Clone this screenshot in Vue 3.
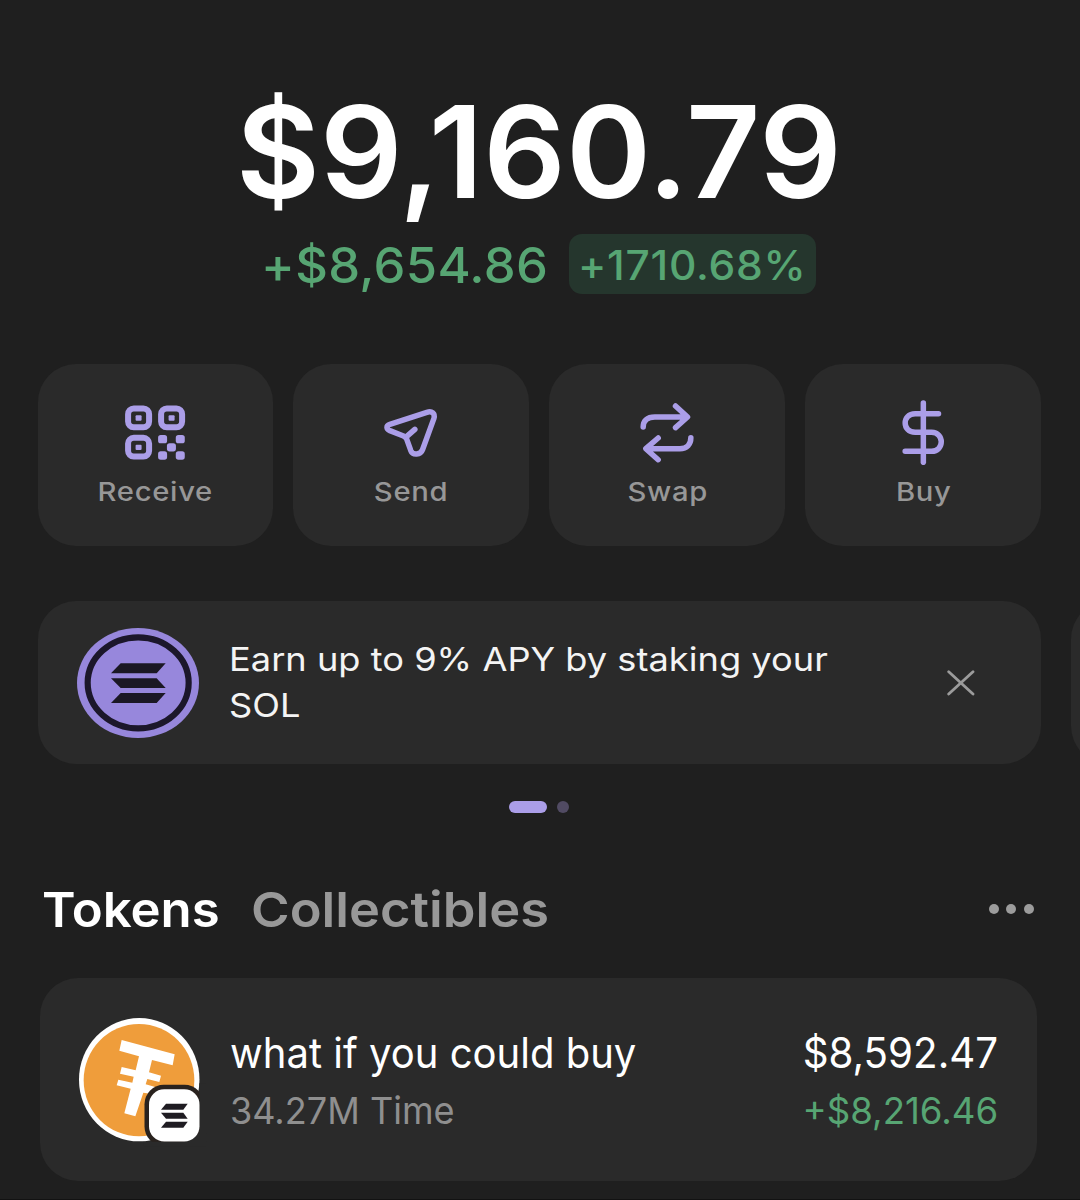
<script setup>
const actions = [
  { label: 'Receive', icon: 'receive', box: '275.75 130 200 200' },
  { label: 'Send', icon: 'send', box: '264.5 130 200 200' },
  { label: 'Swap', icon: 'swap', box: '267.5 130 200 200' },
  { label: 'Buy', icon: 'buy', box: '270.5 130 200 200' }
]
const finders = [[285, 150], [384, 150], [285, 238]]
const modules = [[384, 238], [437, 238], [410.5, 262.5], [384, 287], [437, 287]]
</script>

<template>
  <main class="wallet">
    <h1 class="balance"><span>$9,160.79</span></h1>
    <div class="change">
      <span class="amount">+$8,654.86</span>
      <span class="percent"><span>+1710.68%</span></span>
    </div>

    <nav class="actions">
      <button v-for="a in actions" :key="a.label" class="action" type="button">
        <svg :viewBox="a.box" class="icon">
          <g v-if="a.icon === 'receive'" fill="#ab9ee8">
            <template v-for="(f, i) in finders" :key="'f' + i">
              <rect :x="f[0] + 9" :y="f[1] + 8.5" width="63" height="56" rx="17" fill="none" stroke="#ab9ee8" stroke-width="18" />
              <rect :x="f[0] + 31.5" :y="f[1] + 29" width="18" height="16" rx="3" />
            </template>
            <rect v-for="(m, i) in modules" :key="'m' + i" :x="m[0]" :y="m[1]" width="27" height="25" rx="8" />
          </g>
          <g v-else-if="a.icon === 'send'" class="stroke">
            <path d="M300 206 L411 170 C426 165 437 173 432 189 L398 282 C392 298 369 300 363 285 L350 249 Q347 244 341 241 L300 225 C289 220 288 210 300 206 Z" />
            <path d="M350 243 L375 221" />
          </g>
          <g v-else-if="a.icon === 'swap'" class="stroke">
            <path d="M295 214 C295 196 306 184 330 184 H427 M392 151 L428 184 L392 216" />
            <path d="M438 246 C438 265 427 279 405 279 H304 M340 247 L303 279 L340 312" />
          </g>
          <g v-else class="stroke">
            <path d="M370.5 142 V320" />
            <path d="M416 174 H346 C306 174 306 230 346 230 H395 C434 230 434 287 395 287 H316" />
          </g>
        </svg>
        <span class="label">{{ a.label }}</span>
      </button>
    </nav>

    <section class="promos">
      <article class="promo">
        <svg class="sol" viewBox="141 113 366 330">
          <ellipse cx="324" cy="278" rx="183" ry="165" fill="#9787dc" />
          <ellipse cx="324.5" cy="277.5" rx="151.5" ry="136.5" fill="none" stroke="#1c172b" stroke-width="18.5" />
          <g fill="#1b1824">
            <path d="M272 219 H407 L380 249 H243 Z" />
            <path d="M243 264 H380 L407 293 H272 Z" />
            <path d="M272 308 H407 L380 338 H243 Z" />
          </g>
        </svg>
        <p class="pitch">Earn up to 9% APY by staking your<br />SOL</p>
        <svg class="close" viewBox="0 0 28 26">
          <path d="M1.7 1.7 L26 24 M26 1.7 L1.7 24" />
        </svg>
      </article>
      <article class="promo"></article>
    </section>
    <div class="pager"><i class="on"></i><i></i></div>

    <div class="tabs">
      <span class="tab active">Tokens</span>
      <span class="tab">Collectibles</span>
      <span class="more"><i></i><i></i><i></i></span>
    </div>

    <section class="token">
      <svg class="coin" viewBox="147 144 363 372">
        <ellipse cx="327.7" cy="329" rx="180.7" ry="185" fill="#fff" />
        <ellipse cx="327" cy="330.5" rx="166" ry="168.5" fill="#ef9d3b" />
        <path fill="#fff" d="M275 210 L434 253 L428 286 L366 270 L357 307 L393 317 L388 336 L352 327 L347 343 L386 354 L381 374 L340 368 L316 439 L283 430 L302 356 L260 346 L265 329 L307 338 L311 320 L270 311 L275 291 L317 301 L327 259 L268 242 Z" />
        <rect x="343.5" y="344.5" width="178" height="183" rx="58" fill="#29221e" />
        <path d="M508 340 H530 V530 H340 V515 H460 L508 490 Z" fill="#2a2a2a" />
        <rect x="357" y="358" width="151.5" height="156.5" rx="46" fill="#fff" />
        <g fill="#1f1c22">
          <path d="M408 401 H473 L460 419 H393 Z" />
          <path d="M393 428 H460 L473 446 H408 Z" />
          <path d="M408 455 H473 L460 473 H393 Z" />
        </g>
      </svg>
      <div class="info">
        <div class="name">what if you could buy</div>
        <div class="qty">34.27M Time</div>
      </div>
      <div class="value">
        <div class="usd">$8,592.47</div>
        <div class="gain">+$8,216.46</div>
      </div>
    </section>
  </main>
</template>

<style>
body { background: #1f1f1f; }
</style>

<style scoped>
.wallet {
  box-sizing: border-box;
  width: 1080px;
  height: 1200px;
  padding: 76.5px 0 0 37.5px;
  overflow: hidden;
  background: #1f1f1f;
  border-bottom: 1px solid #121212;
  color: #fff;
  font-family: Inter, "Liberation Sans", sans-serif;
  white-space: nowrap;
}
.balance {
  margin: 0 0 0 198.5px;
  height: 150px;
  font-size: 127.5px;
  line-height: 150px;
  font-weight: 560;
}
.balance span {
  display: inline-block;
  transform: scaleX(1.013);
  transform-origin: left;
}
.change {
  display: flex;
  justify-content: space-between;
  width: 554.5px;
  height: 60px;
  margin: 7px 0 0 223.5px;
  color: #57a573;
  font-weight: 550;
}
.amount {
  font-size: 49px;
  line-height: 64px;
  letter-spacing: 0.3px;
  transform: scaleX(1.034);
  transform-origin: left;
}
.percent {
  box-sizing: border-box;
  width: 246.5px;
  height: 60px;
  padding-left: 9px;
  border-radius: 13px;
  background: #25362d;
  font-size: 40.5px;
  line-height: 63px;
}
.percent span {
  display: inline-block;
  letter-spacing: 0.7px;
  transform: scaleX(1.05);
  transform-origin: left;
}
.actions {
  display: flex;
  gap: 20.6px;
  margin-top: 70px;
}
.action {
  display: flex;
  flex-direction: column;
  align-items: center;
  width: 235.4px;
  height: 182.3px;
  padding: 35px 0 0;
  border: 0;
  border-radius: 38px;
  background: #2a2a2a;
  color: #979797;
  font: 540 26px/40px Inter, "Liberation Sans", sans-serif;
}
.icon {
  flex: none;
  width: 66.7px;
  height: 66.7px;
  margin-bottom: 7px;
}
.stroke {
  fill: none;
  stroke: #ab9ee8;
  stroke-width: 16.5;
  stroke-linecap: round;
  stroke-linejoin: round;
}
.label {
  letter-spacing: 0.6px;
  margin-right: -0.6px;
  transform: scaleX(1.125);
}
.promos {
  display: flex;
  gap: 30.5px;
  margin-top: 55.2px;
}
.promo {
  box-sizing: border-box;
  flex: none;
  display: flex;
  align-items: center;
  width: 1003px;
  height: 163.5px;
  padding: 0 66px 0 39.5px;
  border-radius: 38px;
  background: #2a2a2a;
}
.sol {
  width: 122px;
  height: 110px;
}
.pitch {
  margin: 0.5px 0 0 30px;
  color: #f4f4f4;
  font-size: 33px;
  line-height: 45.5px;
  transform: scaleX(1.098);
  transform-origin: left;
}
.close {
  width: 28px;
  height: 26px;
  margin-left: auto;
  fill: none;
  stroke: #9b9b9b;
  stroke-width: 2.8;
  stroke-linecap: round;
}
.pager {
  display: flex;
  gap: 10px;
  margin: 36.5px 0 0 471px;
}
.pager i {
  width: 12px;
  height: 12px;
  border-radius: 6px;
  background: #514b63;
}
.pager .on {
  width: 38.5px;
  background: #ab9ee8;
}
.tabs {
  display: flex;
  align-items: center;
  height: 60px;
  margin: 66px 46px 0 4.8px;
  font-size: 48.5px;
  line-height: 60px;
  font-weight: 630;
}
.tab {
  flex: none;
  width: 209.2px;
  padding-top: 2px;
  color: #989898;
  transform: scaleX(1.081);
  transform-origin: left;
}
.active {
  color: #fff;
  transform: scaleX(1.05);
}
.more {
  display: flex;
  gap: 7.4px;
  margin-left: auto;
}
.more i {
  width: 10.2px;
  height: 10.2px;
  border-radius: 50%;
  background: #9c9c9c;
}
.token {
  box-sizing: border-box;
  display: flex;
  align-items: flex-start;
  width: 997px;
  height: 203px;
  margin: 39px 0 0 2.5px;
  padding: 40px 38.5px 0 39px;
  border-radius: 38px;
  background: #2a2a2a;
  line-height: 58px;
}
.coin {
  width: 121px;
  height: 124px;
  overflow: visible;
}
.info {
  margin: 6.4px 0 0 30px;
}
.name {
  font-size: 42px;
  transform: scaleX(0.953);
  transform-origin: left;
}
.qty {
  color: #8f8f8f;
  font-size: 37.3px;
  transform: scaleX(0.967);
  transform-origin: left;
}
.value {
  margin: 6.4px 0 0 auto;
  text-align: right;
}
.usd {
  font-size: 41.7px;
  transform: scaleX(0.967);
  transform-origin: right;
}
.gain {
  color: #57a573;
  font-size: 37.2px;
  transform: scaleX(0.984);
  transform-origin: right;
}
</style>
